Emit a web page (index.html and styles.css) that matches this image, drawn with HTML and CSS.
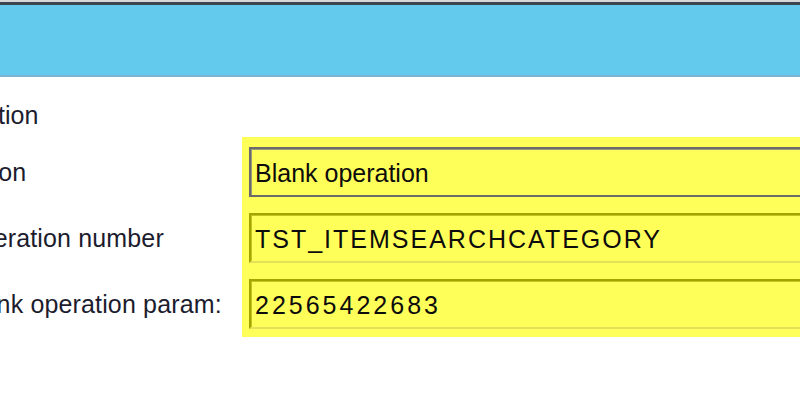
FILE: index.html
```html
<!DOCTYPE html>
<html>
<head>
<meta charset="utf-8">
<link rel="stylesheet" href="styles.css">
</head>
<body>
<div class="topbar"></div>
<div class="content">
  <div class="section">Section</div>
  <div class="form">
    <div class="labels">
      <div class="label label-short">Action</div>
      <div class="label">Operation number</div>
      <div class="label">Blank operation param:</div>
    </div>
    <div class="panel">
      <div class="field field-active">Blank operation</div>
      <div class="field field-caps">TST_ITEMSEARCHCATEGORY</div>
      <div class="field field-digits">22565422683</div>
    </div>
  </div>
</div>
</body>
</html>
```

FILE: styles.css
```css
html, body {
  margin: 0;
  padding: 0;
  background: #ffffff;
  overflow: hidden;
  width: 800px;
  height: 400px;
}
body {
  font-family: "Liberation Sans", Arial, sans-serif;
  font-size: 25px;
  color: #1c1c2e;
}
.topbar {
  height: 70px;
  background: #63caee;
  border-top: 2px solid #d6d8da;
  box-shadow: inset 0 3px 0 #3d4650;
  padding-top: 3px;
  border-bottom: 2px solid #7cb2d4;
}
.content {
  margin-left: -40px;
  padding-top: 23px;
}
.section {
  line-height: 30px;
  height: 30px;
  white-space: nowrap;
  margin-left: -5px;
}
.form {
  display: flex;
  margin-top: 7px;
}
.labels {
  width: 282px;
  flex: none;
  display: flex;
  flex-direction: column;
  gap: 16px;
  padding-top: 10px;
}
.label {
  height: 50px;
  box-sizing: border-box;
  padding-top: 4px;
  line-height: 42px;
  white-space: nowrap;
  letter-spacing: 0.15px;
}
.label-short {
  margin-left: -4px;
}
.panel {
  flex: 1;
  background: #ffff5a;
  padding: 10px 0 8px 7px;
  display: flex;
  flex-direction: column;
  gap: 16px;
}
.field {
  height: 50px;
  box-sizing: border-box;
  padding: 3px 0 0 4px;
  line-height: 42px;
  color: #0c0c0c;
  white-space: nowrap;
  margin-right: -20px;
  border-style: solid;
  border-width: 2px;
  border-color: #a4a400 #dcdc50 #e2e25a #a4a400;
  box-shadow: inset 1px 1px 0 #c4c420;
}
.field-active {
  border-color: #6a6a6a;
  box-shadow: inset 1px 1px 0 #9a9a7a;
}
.field-caps {
  letter-spacing: 2px;
}
.field-digits {
  letter-spacing: 3px;
}
```
